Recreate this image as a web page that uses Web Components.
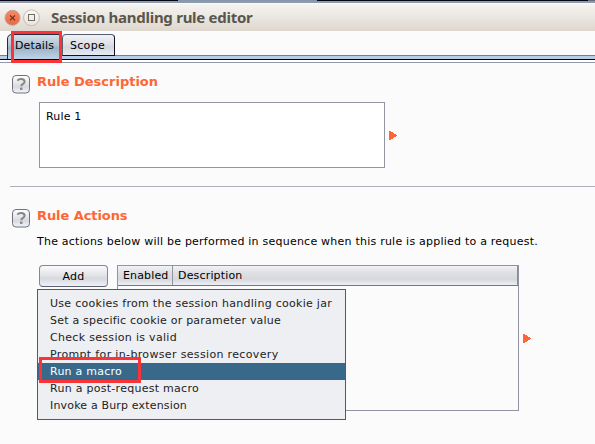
<!DOCTYPE html>
<html lang="en">
<head>
<meta charset="utf-8">
<title>Session handling rule editor</title>
<style>
html,body{margin:0;width:595px;height:444px;overflow:hidden;background:#fbfbfb}
body{font:11px/17px "DejaVu Sans",sans-serif;color:#000}
</style>
</head>
<body>
<rule-editor></rule-editor>
<script>
const define = (name, html, ready) => customElements.define(name, class extends HTMLElement {
  connectedCallback() {
    if (this.shadowRoot) return;
    const t = document.createElement('template');
    t.innerHTML = html;
    this.attachShadow({mode: 'open'}).append(t.content.cloneNode(true));
    if (ready) ready(this);
  }
});

/* One line of text, tracked so that it fills the width attribute. */
define('ui-text', `<style>:host{display:inline-block;white-space:nowrap}span{display:inline-block}</style><span><slot></slot></span>`, el => {
  const want = +el.getAttribute('width');
  const span = el.shadowRoot.querySelector('span');
  if (want) {
    const n = el.textContent.length;
    span.style.letterSpacing = (want - span.getBoundingClientRect().width) / n + 'px';
  }
});

define('title-bar', `<style>
:host{display:block;height:31px;box-sizing:border-box;color:#5b564c;
 background:linear-gradient(90deg,#060612 178px,#8796a8 178px 317px,#060612 317px 588px,#666c7c 588px) 0 0/100% 1px no-repeat,
 linear-gradient(#8c9bad,#8c9bad) 0 1px/100% 2px no-repeat,
 linear-gradient(#fcfbfa,#fcfbfa) 0 3px/100% 1px no-repeat,
 linear-gradient(#f6f4f1 4px,#ded7ce 31px)}
div{display:flex;align-items:center;padding:4px 0 0 4px;height:27px}
svg{display:block;flex:none}
ui-text{font:bold 15px/20px "Noto Sans","Open Sans",sans-serif;margin:-2px 0 0 10px}
</style><div>
<svg width="37" height="18" viewBox="0 0 37 18">
<defs><linearGradient id="o" x2="0" y2="1"><stop stop-color="#f58a67"/><stop offset="1" stop-color="#ec6740"/></linearGradient>
<linearGradient id="w" x2="0" y2="1"><stop stop-color="#fbfaf8"/><stop offset="1" stop-color="#e8e3dc"/></linearGradient></defs>
<circle cx="8.5" cy="8.8" r="7.5" fill="url(#o)" stroke="#b5a79b"/>
<path d="M6 6.3l5 5M11 6.3l-5 5" stroke="#6b3020" stroke-width="1.2" fill="none"/>
<circle cx="27.5" cy="8.8" r="7.9" fill="url(#w)" stroke="#c3bbb1"/>
<rect x="24.5" y="5.5" width="6" height="6" fill="none" stroke="#706b64"/></svg>
<ui-text width="201.5">Session handling rule editor</ui-text></div>`);

define('tab-item', `<style>
:host{display:block;box-sizing:border-box;width:53px;height:22px;border:1px solid #111420;border-top-color:#555e70;border-left-color:#596171;border-radius:4px 4px 0 0;
 background:linear-gradient(#f1f2f5,#dfe1e7 45%,#d4d7df 60%,#e8eaf0);padding:2px 0 0 7px}
:host([selected]){width:55px;height:25px;border-bottom:0;border-color:#232c3c;border-radius:5px 4px 0 0;background:linear-gradient(#d5dfe8,#b4c6d4 40%,#9db4c7 55%,#bfd3e8);padding-left:7px}
</style><slot></slot>`);

define('tab-strip', `<style>
:host{display:flex;align-items:flex-start;height:32px;box-sizing:border-box;padding:3px 0 0 7px;
 background:linear-gradient(transparent 24px,#728093 24px 25px,#b8cde5 25px 28px,#03030f 28px 29px,#fff 29px 31px,#9098a5 31px)}
</style><slot></slot>`);

define('help-icon', `<style>:host{display:block;width:18px;height:19px;flex:none}svg{display:block}</style>
<svg width="18" height="19" viewBox="0 0 18 19"><defs><linearGradient id="g" x2="0" y2="1"><stop stop-color="#fff"/><stop offset=".45" stop-color="#e4e5e9"/><stop offset=".65" stop-color="#d7d9df"/><stop offset="1" stop-color="#f3f6fd"/></linearGradient></defs>
<rect x=".5" y=".5" width="17" height="17.5" rx="3.5" fill="url(#g)" stroke="#70737f"/>
<path d="M5.4 5.6Q6.6 4.1 9 4.1C11.4 4.1 12.6 5.2 12.6 6.7C12.6 9 9.3 8.9 9.3 11.3" fill="none" stroke="#858585" stroke-width="2"/><rect x="8" y="12.6" width="2.5" height="2.3" fill="#858585"/></svg>`);

define('section-head', `<style>
:host{display:flex;height:19px;padding-left:12px;gap:7px}
</style><help-icon></help-icon><slot></slot>`);

define('orange-arrow', `<style>:host{display:block;width:8px;height:9px;flex:none}svg{display:block}</style>
<svg width="8" height="9" viewBox="0 0 8 9" shape-rendering="crispEdges"><path d="M0 0h2v1h2v1h1v1h2v1h1v1h-1v1h-2v1h-1v1h-2v1h-2z" fill="#ff6633"/></svg>`);

define('text-area', `<style>:host{display:block;box-sizing:border-box;width:346px;height:66px;border:1px solid #9294a2;background:#fff;padding:5px 0 0 6px}</style><slot></slot>`);

define('push-button', `<style>:host{display:block;box-sizing:border-box;width:69px;height:22px;border:1px solid #858793;border-bottom-color:#5e6270;border-radius:4px;text-align:center;padding:2px 0 0 0;
background:linear-gradient(#fafbfc,#e1e2e6 50%,#d6d8dd 60%,#edf0f7)}</style><slot></slot>`);

define('action-table', `<style>
:host{display:block;box-sizing:border-box;width:402px;height:146px;border:1px solid #9294a2}
div{display:flex;height:19px;border-bottom:1px solid #747783;background:linear-gradient(#f2f3f6,#dee0e4 35%,#d6d8dc 70%,#eceff8)}
span{box-sizing:border-box;padding:1px 0 0 5px}
.e{width:55px;border-right:1px solid #9093a0}.d{flex:1;border-right:1px solid #888b98}
</style><div><span class="e"><ui-text width="45.5">Enabled</ui-text></span><span class="d"><ui-text width="64.5">Description</ui-text></span></div>`);

define('menu-item', `<style>:host{display:block;height:17px;padding-left:12px;color:#232323}:host([selected]){background:#39698a;color:#fff}</style><slot></slot>`);

define('popup-menu', `<style>:host{display:block;box-sizing:border-box;position:absolute;left:37px;top:289px;width:309px;height:131px;border:1px solid #595959;background:#edeff2;padding-top:5px}</style><slot></slot>`);

define('red-frame', `<style>:host{display:block;box-sizing:border-box;position:absolute;border:3px solid #fb3337}</style>`);

define('rule-editor', `<style>
:host{display:block;position:relative;width:595px;height:444px;overflow:hidden;background:#fbfbfb}
section-head{margin-top:12px}
section-head ui-text{font:bold 13px/15px "DejaVu Sans",sans-serif;color:#ff6633;margin-top:-1px}
.row{display:flex;padding-left:39px}
.area{margin-top:8px;gap:4px;align-items:center}
hr{height:1px;border:0;margin:18px 0 0 10px;background:#adb0bb}
.actions{margin-top:22px}
.note{display:block;margin:5px 0 0 37px;height:17px}
.table{margin-top:15px}
action-table{margin-left:9px}
.table orange-arrow{margin:69px 0 0 4px}
.f1{left:11px;top:31px;width:51px;height:32px}
.f2{left:39px;top:357px;width:102px;height:26px}
</style>
<title-bar></title-bar>
<tab-strip><tab-item selected><ui-text width="39">Details</ui-text></tab-item><tab-item><ui-text width="35">Scope</ui-text></tab-item></tab-strip>
<section-head><ui-text width="121">Rule Description</ui-text></section-head>
<div class="row area"><text-area><ui-text width="35.5">Rule 1</ui-text></text-area><orange-arrow></orange-arrow></div>
<hr>
<section-head class="actions"><ui-text width="90.5">Rule Actions</ui-text></section-head>
<ui-text class="note" width="501">The actions below will be performed in sequence when this rule is applied to a request.</ui-text>
<div class="row table"><push-button><ui-text width="22">Add</ui-text></push-button><action-table></action-table><orange-arrow></orange-arrow></div>
<popup-menu>
<menu-item><ui-text width="282">Use cookies from the session handling cookie jar</ui-text></menu-item>
<menu-item><ui-text width="231">Set a specific cookie or parameter value</ui-text></menu-item>
<menu-item><ui-text width="127">Check session is valid</ui-text></menu-item>
<menu-item><ui-text width="228.5">Prompt for in-browser session recovery</ui-text></menu-item>
<menu-item selected><ui-text width="72">Run a macro</ui-text></menu-item>
<menu-item><ui-text width="149">Run a post-request macro</ui-text></menu-item>
<menu-item><ui-text width="137">Invoke a Burp extension</ui-text></menu-item>
</popup-menu>
<red-frame class="f1"></red-frame><red-frame class="f2"></red-frame>`);
</script>
</body>
</html>
